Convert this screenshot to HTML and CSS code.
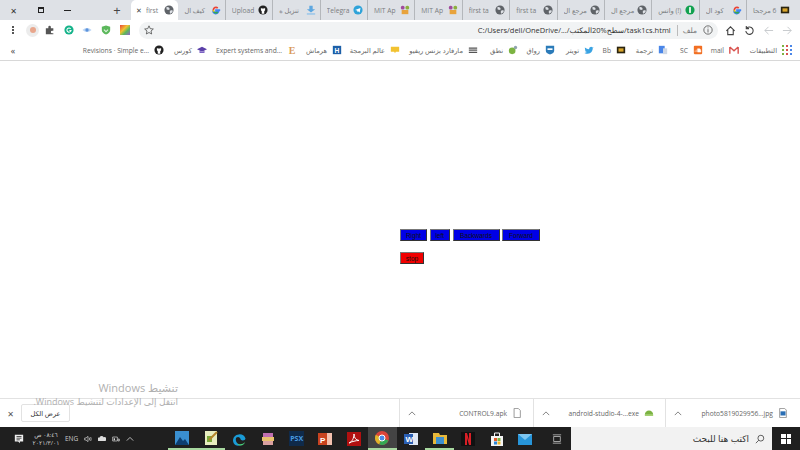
FILE: index.html
```html
<!DOCTYPE html>
<html>
    <head>
        <meta charset="utf-8">
        <link rel="stylesheet" href="styles.css">
    </head>
    <body>
        <svg class="defs" width="0" height="0">
            <symbol id="globe" viewBox="0 0 12 12">
                <circle cx="6" cy="6" r="5.5" fill="#5f6368"/>
                <path d="M3 2l3 1 1 2-2 1-2-1zM7 7l3-1 .5 2-2.500 2.500-1-1z" fill="#dee1e6"/>
            </symbol>
            <symbol id="google" viewBox="0 0 12 12">
                <path d="M11 6.200H6v2h2.900A3.200 3.200 0 0 1 2.800 6" fill="none" stroke="#4285f4" stroke-width="2"/>
                <path d="M2.800 6a3.200 3.200 0 0 1 5.300-2.400" fill="none" stroke="#ea4335" stroke-width="2"/>
                <path d="M2.800 6a3.200 3.200 0 0 0 .6 1.900" fill="none" stroke="#fbbc05" stroke-width="2"/>
                <path d="M3.400 8a3.200 3.200 0 0 0 4.700.6" fill="none" stroke="#34a853" stroke-width="2"/>
            </symbol>
            <symbol id="github" viewBox="0 0 12 12">
                <circle cx="6" cy="6" r="5.500" fill="#222"/>
                <path d="M3.500 3.500l1.200.6h2.600l1.200-.6v2.700L7.500 7.500v3h-3v-3L3.500 6.200z" fill="#fff"/>
            </symbol>
            <symbol id="mit" viewBox="0 0 12 12">
                <rect x="1" y="1" width="4.500" height="4.500" rx="2" fill="#a04a9c"/>
                <rect x="6.500" y="1" width="4.500" height="4.500" rx="2" fill="#8cb03c"/>
                <rect x="2" y="6" width="8" height="5" fill="#e8a33c"/>
            </symbol>
            <symbol id="bb" viewBox="0 0 12 12">
                <rect x="1" y="2" width="10" height="8" fill="#2a2410"/>
                <rect x="3" y="4" width="6" height="4" fill="#d8a52c"/>
            </symbol>
            <symbol id="chev" viewBox="0 0 10 6">
                <path d="M1 5l4-4 4 4" fill="none" stroke="#666" stroke-width="1"/>
            </symbol>
        </svg>

        <div class="tabbar">
            <div class="winctl">
                <span class="winbtn">✕</span>
                <span class="winbtn"><i class="restore"></i></span>
                <span class="winbtn"><i class="minimize"></i></span>
                <span class="newtab">+</span>
            </div>
            <div class="tab active"><span class="tabclose">✕</span><span class="tabtext">first</span><svg class="fav"><use href="#globe"/></svg></div>
            <div class="tab"><span class="tabtext">كيف ال</span><svg class="fav"><use href="#google"/></svg></div>
            <div class="tab"><span class="tabtext">Upload</span><svg class="fav"><use href="#github"/></svg></div>
            <div class="tab"><span class="tabtext">تنزيل ه</span>
                <svg class="fav" viewBox="0 0 12 12"><path d="M4 1h4v4h3L6 9 1 5h3z" fill="#5ea7e0"/><rect x="1" y="10" width="10" height="1.500" fill="#8cc0ea"/></svg></div>
            <div class="tab"><span class="tabtext">Telegra</span>
                <svg class="fav" viewBox="0 0 12 12"><circle cx="6" cy="6" r="5.500" fill="#2fa3d9"/><path d="M2.500 6l6.500-2.500-1 5.500-2-1.500-1 1V6.500z" fill="#fff"/></svg></div>
            <div class="tab"><span class="tabtext">MIT Ap</span><svg class="fav"><use href="#mit"/></svg></div>
            <div class="tab"><span class="tabtext">MIT Ap</span><svg class="fav"><use href="#mit"/></svg></div>
            <div class="tab"><span class="tabtext">first ta</span><svg class="fav"><use href="#globe"/></svg></div>
            <div class="tab"><span class="tabtext">first ta</span><svg class="fav"><use href="#globe"/></svg></div>
            <div class="tab"><span class="tabtext">مرجع ال</span><svg class="fav"><use href="#globe"/></svg></div>
            <div class="tab"><span class="tabtext">مرجع ال</span><svg class="fav"><use href="#globe"/></svg></div>
            <div class="tab"><span class="tabtext" dir="rtl">(!) واتس</span>
                <svg class="fav" viewBox="0 0 12 12"><circle cx="6" cy="6" r="5.500" fill="#12a150"/><rect x="5" y="2.500" width="2" height="7" fill="#fff"/></svg></div>
            <div class="tab"><span class="tabtext">كود ال</span><svg class="fav"><use href="#google"/></svg></div>
            <div class="tab"><span class="tabtext" dir="rtl">6 مرجحا</span><svg class="fav"><use href="#bb"/></svg></div>
        </div>

        <div class="toolbar">
            <span class="menu"><i></i><i></i><i></i></span>
            <div class="ext">
                <span class="avatar"><i></i></span>
                <svg class="exticon" viewBox="0 0 12 12"><path d="M1 4h3V2.500a1.500 1.500 0 0 1 3 0V4h3v3H8.500a1.500 1.500 0 0 0 0 3H10v1H1z" fill="#555"/></svg>
                <svg class="exticon" viewBox="0 0 12 12"><circle cx="6" cy="6" r="5.500" fill="#15b38a"/><path d="M8 4.500A2.500 2.500 0 1 0 8.500 6.500H6.500" fill="none" stroke="#fff" stroke-width="1.300"/></svg>
                <svg class="exticon" viewBox="0 0 12 12"><path d="M.5 6Q6 1 11.500 6 6 11 .5 6z" fill="#b9d4f5"/><circle cx="6" cy="6" r="2" fill="#5c93dc"/></svg>
                <svg class="exticon" viewBox="0 0 12 12"><path d="M1 2l5-1.500L11 2v4q0 3.500-5 5.500Q1 9.500 1 6z" fill="#5cb85c"/><path d="M3.500 5.500L6 8l2.500-2.500" fill="none" stroke="#dff3df" stroke-width="1.300"/></svg>
                <span class="rainbow"></span>
            </div>
            <div class="omnibox">
                <svg class="star" viewBox="0 0 12 12"><path d="M6 1l1.500 3.400 3.700.4-2.800 2.400.8 3.600L6 9l-3.200 1.800.8-3.600L.8 4.800l3.700-.4z" fill="none" stroke="#555" stroke-width="1"/></svg>
                <span class="url">C:/Users/dell/OneDrive/.../سطح%20المكتب/task1cs.html</span>
                <span class="omnisep"></span>
                <span class="scheme">ملف</span>
                <svg class="info" viewBox="0 0 12 12"><circle cx="6" cy="6" r="5" fill="none" stroke="#555"/><rect x="5.500" y="5" width="1" height="4" fill="#555"/><rect x="5.500" y="3" width="1" height="1" fill="#555"/></svg>
            </div>
            <div class="nav">
                <svg viewBox="0 0 12 12"><path d="M1.500 6.500L6 2l4.500 4.500M3 5.500V10.500H9V5.500" fill="none" stroke="#444" stroke-width="1.200"/></svg>
                <svg viewBox="0 0 12 12"><path d="M3 3.500A4 4 0 1 1 2 6.500M2.500 1v3h3" fill="none" stroke="#444" stroke-width="1.200"/></svg>
                <svg viewBox="0 0 12 12"><path d="M6 2L2 6l4 4M2 6h9" fill="none" stroke="#c4c7ca" stroke-width="1"/></svg>
                <svg viewBox="0 0 12 12"><path d="M6 2l4 4-4 4M10 6H1" fill="none" stroke="#c4c7ca" stroke-width="1"/></svg>
            </div>
        </div>

        <div class="bookmarks">
            <span class="more">«</span>
            <div class="bmlist">
                <span class="bm b-rev">Revisions · Simple e...<svg class="fav"><use href="#github"/></svg></span>
                <span class="bm b-kor">كورس<svg class="fav" viewBox="0 0 12 12"><path d="M6 2l6 3-6 3-6-3z" fill="#5a3fa8"/><path d="M3 7v2.500h6V7L6 8.500z" fill="#7c63c4"/></svg></span>
                <span class="bm b-exp">Expert systems and...<svg class="fav" viewBox="0 0 12 12"><text x="2" y="11" class="favletter e-letter">E</text></svg></span>
                <span class="bm b-her">هرماش<svg class="fav" viewBox="0 0 12 12"><rect x="1" y="1" width="10" height="10" fill="#1c5fa8"/><text x="3" y="9.500" class="favletter h-letter">H</text></svg></span>
                <span class="bm b-alm">عالم البرمجة<svg class="fav" viewBox="0 0 12 12"><path d="M1 2h10v6H7l-1 2-1-2H1z" fill="#f2c230"/></svg></span>
                <span class="bm b-har">مارفارد بزنس ريفيو<svg class="fav" viewBox="0 0 12 12"><path d="M1 3h10v1.500H1zM1 5.500h10V7H1zM1 8h10v1.500H1z" fill="#555"/></svg></span>
                <span class="bm b-not">نطق<svg class="fav" viewBox="0 0 12 12"><circle cx="5" cy="7" r="4" fill="#7cb342"/><circle cx="9" cy="3" r="2" fill="#90a4ae"/></svg></span>
                <span class="bm b-rwq">رواق<svg class="fav" viewBox="0 0 12 12"><path d="M1 1h10v6q0 3-5 4.500Q1 10 1 7z" fill="#2b7bb9"/><rect x="3" y="4" width="6" height="2" fill="#fff"/></svg></span>
                <span class="bm b-twt">تويتر<svg class="fav" viewBox="0 0 12 12"><path d="M1 3q2.500 2 5 2 0-3 2.500-3 1 0 1.500 1l1.500-.5-1 1.500q0 6-6 6.500-2 0-4-1 2 0 3-1-2-.5-2.500-2h1Q1 6 1 3z" fill="#3aa3e3"/></svg></span>
                <span class="bm b-bb">Bb<svg class="fav"><use href="#bb"/></svg></span>
                <span class="bm b-trn">ترجمة<svg class="fav" viewBox="0 0 12 12"><rect x="1" y="1" width="7" height="9" fill="#4a86e8"/><rect x="6" y="4" width="5" height="7" fill="#cfd8e6"/></svg></span>
                <span class="bm b-sc">SC<svg class="fav" viewBox="0 0 12 12"><rect x="1" y="1" width="10" height="10" rx="1" fill="#f26f23"/><path d="M2.500 8.500V6.500M4 8.500V5.500M5.500 8.500V4.500H8Q9.500 5 9.500 8.500z" stroke="#fff" fill="#fff" stroke-width=".6"/></svg></span>
                <span class="bm b-mail">mail<svg class="fav" viewBox="0 0 12 12"><path d="M1 2.500v8M11 2.500v8M1 2.500L6 7l5-4.500" fill="none" stroke="#d9534f" stroke-width="1.700"/></svg></span>
                <span class="bm b-app">التطبيقات<span class="appgrid"><i></i><i></i><i></i><i></i><i></i><i></i><i></i><i></i><i></i></span></span>
            </div>
        </div>

        <main class="content">
            <div class="btnrow">
                <button class="drive b-right">Right</button>
                <button class="drive b-left">left</button>
                <button class="drive b-back">Backwards</button>
                <button class="drive b-fwd">Forward</button>
            </div>
            <div class="btnrow">
                <button class="halt">stop</button>
            </div>
        </main>

        <div class="watermark" dir="rtl">
            <div class="wm1">تنشيط Windows</div>
            <div class="wm2">انتقل إلى الإعدادات لتنشيط Windows.</div>
        </div>

        <div class="downloads">
            <span class="dlclose">✕</span>
            <span class="showall">عرض الكل</span>
            <div class="dlspace"></div>
            <div class="dlitem">
                <svg class="chev"><use href="#chev"/></svg>
                <span class="dlname">CONTROL9.apk</span>
                <svg class="dlicon" viewBox="0 0 12 12"><path d="M2.500 .5h5l2.500 2.500v8.500H2.500z" fill="#fff" stroke="#888"/></svg>
            </div>
            <div class="dlitem">
                <svg class="chev"><use href="#chev"/></svg>
                <span class="dlname">android-studio-4-...exe</span>
                <svg class="dlicon" viewBox="0 0 12 12"><path d="M1 8a5 5 0 0 1 10 0z" fill="#7cb342"/><rect x="1" y="8" width="10" height="1.500" fill="#9ccc65"/></svg>
            </div>
            <div class="dlitem">
                <svg class="chev"><use href="#chev"/></svg>
                <span class="dlname">photo5819029956...jpg</span>
                <svg class="dlicon" viewBox="0 0 12 12"><path d="M2 .5h6l2 2v9H2z" fill="#fff" stroke="#888"/><rect x="3" y="4" width="6" height="5" fill="#2a6fb5"/></svg>
            </div>
        </div>

        <div class="taskbar">
            <div class="tray">
                <svg class="notif" viewBox="0 0 12 12"><path d="M1 1h10v8H7v2L5 9H1z" fill="#eee"/><path d="M3 3h6M3 5h6M3 7h4" stroke="#333"/></svg>
                <div class="clock" dir="rtl"><span>٠٨:٤٦ ص</span><span>٢٠٢١/٣/٠١</span></div>
                <span class="lang">ENG</span>
                <svg class="trayicon" viewBox="0 0 12 12"><path d="M1 4.500h2L6 2v8L3 7.500H1z" fill="none" stroke="#ddd"/><path d="M8 4q1 2 0 4M10 3q1.500 3 0 6" fill="none" stroke="#ddd"/></svg>
                <svg class="trayicon" viewBox="0 0 12 12"><path d="M1 9a2.500 2.500 0 0 1 1-5 3.500 3.500 0 0 1 6.500-.5A3 3 0 0 1 11 9z" fill="#ddd"/></svg>
                <svg class="trayicon" viewBox="0 0 12 12"><path d="M1 3h7v6H1zM9 6h2v3H9z" fill="none" stroke="#ddd"/><rect x="2.500" y="5" width="2" height="3" fill="#ddd"/></svg>
                <svg class="trayicon" viewBox="0 0 10 6"><path d="M1 5l4-4 4 4" fill="none" stroke="#ddd"/></svg>
            </div>
            <div class="apps">
                <span class="app under"><svg viewBox="0 0 14 14"><rect x="0" y="0" width="14" height="14" fill="#3a8fd0"/><path d="M0 14l5-8 3 4 2-2 4 6z" fill="#0d3e70"/></svg></span>
                <span class="app under"><svg viewBox="0 0 14 14"><rect x="1" y="0" width="12" height="14" fill="#e8edc0"/><rect x="3" y="5" width="5" height="6" fill="#7aa83a"/><path d="M5 9L13 1" stroke="#b5852a" stroke-width="2"/></svg></span>
                <span class="app"><svg viewBox="0 0 14 14"><path d="M1 8a6.500 6.500 0 0 1 12.500-1.500c0 2.500-5 2.500-5 .5 0-1-2-3-4-1.500C2.500 7.500 5 13 9 13 4 15 1 12 1 8z" fill="#1a9bd7"/><path d="M5 11c2 2 6 1.500 8-1-1 4-6 5-8 1z" fill="#49d17d"/></svg></span>
                <span class="app"><svg viewBox="0 0 14 14"><rect x="2" y="1" width="10" height="4" fill="#c06fb0"/><rect x="1" y="5" width="12" height="4" fill="#e8c16f"/><rect x="2" y="9" width="10" height="4" fill="#d9a0a0"/></svg></span>
                <span class="app"><span class="psx">PSX</span></span>
                <span class="app"><svg viewBox="0 0 14 14"><rect x="6" y="1" width="8" height="12" fill="#f3c0ae"/><rect x="0" y="1" width="9" height="12" fill="#c8431f"/><text x="2" y="10.500" class="favletter p-letter">P</text></svg></span>
                <span class="app"><svg viewBox="0 0 14 14"><rect x="0" y="0" width="14" height="14" fill="#b11010"/><path d="M2 11c3-1 5-5 5-9 0 4 2 6 5 6.500-3 0-7 1-10 2.500z" fill="none" stroke="#fff" stroke-width="1"/></svg></span>
                <span class="app on"><svg viewBox="0 0 14 14"><circle cx="7" cy="7" r="7" fill="#d9443a"/><path d="M7 7l6.500 2.500A7 7 0 0 1 4 13.300z" fill="#34a853"/><path d="M7 7L.8 3.800A7 7 0 0 0 4 13.300z" fill="#e0b52a"/><circle cx="7" cy="7" r="3" fill="#4a8be8" stroke="#fff" stroke-width="1"/></svg></span>
                <span class="app"><svg viewBox="0 0 14 14"><rect x="5" y="1" width="9" height="12" fill="#dfe7f5"/><rect x="0" y="2" width="9" height="10" fill="#2b5fb3"/><text x="1.500" y="10" class="favletter w-letter">W</text></svg></span>
                <span class="app under"><svg viewBox="0 0 14 14"><path d="M0 2h6l1 2h7v9H0z" fill="#e8b83a"/><rect x="3" y="6" width="8" height="7" fill="#3d8fd0"/></svg></span>
                <span class="app"><svg viewBox="0 0 14 14"><rect width="14" height="14" fill="#111"/><path d="M4 1h2l2 7V1h2v12H8L6 6v7H4z" fill="#d81f26"/></svg></span>
                <span class="app"><svg viewBox="0 0 14 14"><path d="M1 4h12v10H1z" fill="#f4f4f4"/><path d="M4.500 4V1h5v3" fill="none" stroke="#f4f4f4"/><rect x="4" y="6" width="3" height="3" fill="#e35a2b"/><rect x="7.500" y="6" width="3" height="3" fill="#7cb342"/><rect x="4" y="9.500" width="3" height="3" fill="#2b88d8"/><rect x="7.500" y="9.500" width="3" height="3" fill="#f2b52a"/></svg></span>
                <span class="app"><svg viewBox="0 0 14 14"><rect y="2" width="14" height="11" fill="#2795d9"/><path d="M0 2l7 6 7-6z" fill="#7cc5f0"/></svg></span>
            </div>
            <svg class="taskview" viewBox="0 0 12 12"><path d="M2 3h8v6H2zM1 1h10M1 11h10" fill="none" stroke="#bbb"/></svg>
            <div class="search">
                <span class="searchtext">اكتب هنا للبحث</span>
                <svg class="lens" viewBox="0 0 12 12"><circle cx="7" cy="5" r="3.500" fill="none" stroke="#444"/><path d="M4.500 7.500L1 11" stroke="#444"/></svg>
            </div>
            <div class="start"><span class="winlogo"><i></i><i></i><i></i><i></i></span></div>
        </div>
    </body>
</html>
```

FILE: styles.css
```css
html, body {
    margin: 0;
    padding: 0;
}
body {
    width: 800px;
    height: 450px;
    display: flex;
    flex-direction: column;
    position: relative;
    overflow: hidden;
    background-color: white;
    font-family: "Open Sans", "DejaVu Sans", sans-serif;
    font-size: 6.7px;
    color: #666;
}
.defs {
    position: absolute;
}
svg {
    display: block;
    flex-shrink: 0;
}
i {
    display: block;
}

/* tab strip */
.tabbar {
    height: 20px;
    display: flex;
    background-color: #dee1e6;
    flex-shrink: 0;
}
.winctl {
    width: 131px;
    display: flex;
    align-items: center;
    flex-shrink: 0;
}
.winbtn {
    width: 27px;
    display: flex;
    justify-content: center;
    font-size: 8px;
    color: #333;
}
.restore {
    width: 6px;
    height: 6px;
    border: 1px solid #222;
    border-top-width: 2px;
    box-sizing: border-box;
}
.minimize {
    width: 7px;
    height: 1px;
    background-color: #222;
}
.newtab {
    margin-left: 29px;
    width: 14px;
    text-align: center;
    font-size: 13px;
    line-height: 14px;
    color: #444;
}
.tab {
    width: 47.4px;
    height: 20px;
    box-sizing: border-box;
    display: flex;
    align-items: center;
    justify-content: space-between;
    padding: 0 4px 0 6px;
    border-right: 1px solid #b4b7bb;
    overflow: hidden;
    flex-shrink: 0;
}
.tab:last-child {
    border-right: none;
}
.tab.active {
    background-color: white;
    border-right: none;
    border-radius: 5px 5px 0 0;
    padding-left: 5px;
}
.tabtext {
    flex: 1;
    white-space: nowrap;
    overflow: hidden;
    color: #7a7d80;
    margin-right: 2px;
    text-align: left;
}
.tabclose {
    font-size: 7px;
    color: #444;
    margin: 0 4px 0 0;
}
.fav {
    width: 10px;
    height: 10px;
}

/* toolbar */
.toolbar {
    height: 20px;
    display: flex;
    align-items: center;
    flex-shrink: 0;
}
.menu {
    width: 26px;
    display: flex;
    flex-direction: column;
    align-items: center;
    gap: 1px;
}
.menu i {
    width: 2px;
    height: 2px;
    background-color: #555;
}
.ext {
    width: 113px;
    display: flex;
    align-items: center;
    gap: 8.7px;
    box-sizing: border-box;
    flex-shrink: 0;
}
.avatar {
    width: 13px;
    height: 13px;
    margin-right: -2.7px;
    border-radius: 50%;
    background-color: #ececec;
    display: flex;
    align-items: center;
    justify-content: center;
}
.avatar i {
    width: 6px;
    height: 6px;
    border-radius: 50%;
    background-color: #e8a68c;
}
.exticon {
    width: 10px;
    height: 10px;
}
.rainbow {
    width: 10px;
    height: 10px;
    background: linear-gradient(135deg, #e8443a, #f2c230 40%, #5cb85c 65%, #9b5fd0);
}
.omnibox {
    width: 579px;
    height: 17px;
    background-color: #f1f3f4;
    border-radius: 9px;
    display: flex;
    align-items: center;
    padding: 0 5px;
    box-sizing: border-box;
    flex-shrink: 0;
    font-size: 7.5px;
    color: #333;
}
.star {
    width: 10px;
    height: 10px;
    margin-right: auto;
}
.url {
    white-space: nowrap;
    margin-right: 6px;
}
.omnisep {
    width: 1px;
    height: 11px;
    background-color: #bbb;
    margin-right: 5px;
}
.scheme {
    color: #777;
    margin-right: 6px;
}
.info {
    width: 10px;
    height: 10px;
}
.nav {
    flex: 1;
    display: flex;
    gap: 8px;
    padding-left: 6.5px;
}
.nav svg {
    width: 11px;
    height: 11px;
}

/* bookmarks */
.bookmarks {
    height: 21px;
    display: flex;
    align-items: center;
    justify-content: space-between;
    border-bottom: 1px solid #d8d8d8;
    box-sizing: border-box;
    flex-shrink: 0;
}
.more {
    width: 26px;
    text-align: center;
    font-size: 9px;
    color: #444;
}
.bmlist {
    display: flex;
    align-items: center;
    padding-right: 8px;
}
.bm {
    display: flex;
    align-items: center;
    justify-content: flex-end;
    gap: 5px;
    white-space: nowrap;
    color: #666;
}
.b-rev { width: 85px; }
.b-kor { width: 43px; }
.b-exp { width: 90px; }
.b-her { width: 45px; }
.b-alm { width: 58px; }
.b-har { width: 78px; }
.b-not { width: 40px; }
.b-rwq { width: 37px; }
.b-twt { width: 39px; }
.b-bb { width: 32px; }
.b-trn { width: 42px; }
.b-sc { width: 35px; }
.b-mail { width: 36px; }
.b-app { width: 53px; }
.appgrid {
    width: 10px;
    height: 10px;
    display: grid;
    grid-template-columns: repeat(3, 2px);
    gap: 2px;
}
.appgrid i {
    background-color: #d9534f;
}
.appgrid i:nth-child(3n) {
    background-color: #4a86e8;
}
.appgrid i:nth-child(3n+1) {
    background-color: #7cb342;
}
.favletter {
    font-family: "Liberation Serif", serif;
    font-size: 10px;
    font-weight: bold;
}
.e-letter {
    fill: #d99a5b;
    font-size: 12px;
}
.h-letter, .p-letter, .w-letter {
    fill: white;
    font-size: 8px;
    font-family: "Liberation Sans", sans-serif;
}

/* page content */
.content {
    flex: 1;
    padding: 168px 0 0 400px;
    box-sizing: border-box;
}
.btnrow {
    display: flex;
    gap: 2.5px;
    margin-bottom: 11px;
}
.drive, .halt {
    height: 12px;
    padding: 0;
    font-family: "Liberation Sans", sans-serif;
    font-size: 6.5px;
    color: #111;
    border: 1px solid #555;
    border-color: #777 #333 #333 #777;
}
.drive {
    background-color: #0000e6;
}
.halt {
    background-color: #f00000;
    width: 24px;
}
.b-right { width: 27px; }
.b-left { width: 20.5px; }
.b-back { width: 47px; }
.b-fwd { width: 38px; }

/* windows activation note, lies over the page */
.watermark {
    position: absolute;
    left: 0;
    top: 380px;
    width: 178px;
    color: #b0b0b0;
}
.wm1 {
    font-size: 11px;
    line-height: 16px;
}
.wm2 {
    font-size: 9px;
    line-height: 11px;
    white-space: nowrap;
}

/* download shelf */
.downloads {
    height: 29px;
    border-top: 1px solid #e2e2e2;
    display: flex;
    align-items: center;
    box-sizing: border-box;
    flex-shrink: 0;
}
.dlclose {
    width: 21px;
    text-align: center;
    font-size: 8px;
    color: #555;
}
.showall {
    width: 49px;
    height: 18px;
    border: 1px solid #e2e2e2;
    border-radius: 2px;
    box-sizing: border-box;
    display: flex;
    align-items: center;
    justify-content: center;
    color: #333;
}
.dlspace {
    flex: 1;
}
.dlitem {
    width: 134px;
    height: 100%;
    display: flex;
    align-items: center;
    border-left: 1px solid #e2e2e2;
    box-sizing: border-box;
    padding: 0 11px 0 8px;
}
.dlitem:nth-child(5) {
    width: 132px;
}
.dlitem:last-child {
    width: 135px;
    padding-right: 12px;
}
.chev {
    width: 8px;
    height: 5px;
}
.dlname {
    flex: 1;
    text-align: right;
    margin-right: 5px;
    color: #666;
    white-space: nowrap;
}
.dlicon {
    width: 10px;
    height: 10px;
}

/* windows taskbar */
.taskbar {
    height: 23px;
    display: flex;
    align-items: center;
    background-color: #1f1f1f;
    color: #ccc;
    flex-shrink: 0;
}
.tray {
    width: 168px;
    display: flex;
    align-items: center;
    padding-left: 14px;
    box-sizing: border-box;
    flex-shrink: 0;
}
.notif {
    width: 10px;
    height: 10px;
    margin-right: 8px;
}
.clock {
    width: 28px;
    display: flex;
    flex-direction: column;
    align-items: center;
    font-size: 6px;
    line-height: 8px;
}
.lang {
    margin-left: 5px;
    margin-right: 6px;
    font-size: 6.5px;
}
.trayicon {
    width: 8px;
    height: 8px;
    margin-right: 6px;
}
.apps {
    display: flex;
    width: 372px;
    flex-shrink: 0;
    height: 100%;
}
.app {
    width: 28.6px;
    height: 100%;
    display: flex;
    align-items: center;
    justify-content: center;
    box-sizing: border-box;
}
.app svg {
    width: 14px;
    height: 14px;
}
.app.on {
    background-color: #444;
    border-bottom: 2px solid #a8d8a0;
}
.app.under {
    border-bottom: 2px solid #a8d8a0;
}
.psx {
    background-color: #0f2a4a;
    color: #4a9be0;
    font-size: 7px;
    font-weight: bold;
    padding: 3px 1px;
}
.taskview {
    width: 10px;
    height: 10px;
    margin: 0 9px 0 12px;
}
.search {
    width: 201px;
    height: 100%;
    background-color: #f2f2f2;
    display: flex;
    align-items: center;
    justify-content: flex-end;
    padding-right: 7px;
    box-sizing: border-box;
    flex-shrink: 0;
}
.searchtext {
    font-size: 9px;
    color: #333;
    margin-right: 6px;
}
.lens {
    width: 10px;
    height: 10px;
}
.start {
    flex: 1;
    display: flex;
    justify-content: center;
}
.winlogo {
    width: 10px;
    height: 10px;
    display: grid;
    grid-template-columns: 1fr 1fr;
    gap: 1px;
}
.winlogo i {
    background-color: white;
}
```
